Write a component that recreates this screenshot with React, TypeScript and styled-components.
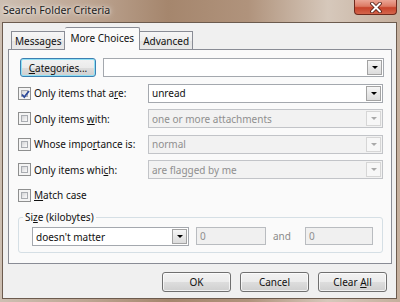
import React from 'react';
import styled, { createGlobalStyle, css } from 'styled-components';

const FONT = `"Noto Sans", "Open Sans", "DejaVu Sans", sans-serif`;

const Global = createGlobalStyle`
  html, body { margin: 0; padding: 0; background: #8b6f5a; }
  body { width: 400px; height: 302px; overflow: hidden; font-family: ${FONT}; }
  * { box-sizing: border-box; }
`;

const Window = styled.div`
  width: 400px;
  height: 302px;
  display: flex;
  flex-direction: column;
  padding: 0 3px 3px 2px;
  background: linear-gradient(90deg, #cdbfb2 0%, #bda592 22%, #a5866d 42%, #b0937c 62%, #d6c8bb 82%, #c5af9d 100%);
`;

const TitleBar = styled.div`
  height: 22px;
  flex: none;
  display: flex;
  justify-content: space-between;
  align-items: flex-start;
`;

const TitleText = styled.div`
  padding: 3px 0 0 1px;
  font-size: 10.6px;
  line-height: 14px;
  color: #1c1c1c;
  text-shadow: 0 0 6px rgba(255, 255, 255, 0.9), 0 0 3px rgba(255, 255, 255, 0.8);
`;

const CloseBtn = styled.div`
  width: 43px;
  height: 15px;
  border: 1px solid #6f2a1d;
  border-top: none;
  border-radius: 0 0 4px 4px;
  background: linear-gradient(180deg, #eba595 0%, #dc7a64 45%, #c7432b 55%, #d4664c 100%);
  display: flex;
  align-items: center;
  justify-content: center;
`;

const Client = styled.div`
  flex: 1;
  border: 1px solid #6c5b4e;
  background: #f0f0f0;
  display: flex;
  flex-direction: column;
  padding: 0 4px 0 5px;
`;

const TabStrip = styled.div`
  height: 26px;
  display: flex;
  align-items: flex-end;
  padding-left: 3px;
`;

const Tab = styled.div<{ $active?: boolean }>`
  font-size: 10px;
  color: #111;
  border: 1px solid #898c95;
  border-bottom: none;
  padding: 0 3px;
  display: flex;
  align-items: center;
  justify-content: center;
  ${(p) =>
    p.$active
      ? css`
          height: 23px;
          margin-bottom: -1px;
          padding: 0 5px 3px;
          background: #fafafa;
          position: relative;
          z-index: 1;
          border-radius: 2px 2px 0 0;
        `
      : css`
          height: 18px;
          background: linear-gradient(180deg, #f6f6f6 0%, #eeeeee 50%, #e3e3e3 51%, #e9e9e9 100%);
          & + & { border-left: none; }
        `}
`;

const Panel = styled.div`
  height: 215px;
  border: 1px solid #898c95;
  background: #fafafa;
  padding: 8px 0 0 9px;
  display: flex;
  flex-direction: column;
  gap: 6.5px;
`;

const Row = styled.div`
  height: 19px;
  display: flex;
  align-items: center;
`;

const Label = styled.div<{ $w?: number }>`
  display: flex;
  align-items: center;
  gap: 3px;
  width: ${(p) => (p.$w ? `${p.$w}px` : 'auto')};
  font-size: 10px;
  color: #111;
  white-space: nowrap;
`;

const U = styled.span`
  text-decoration: underline;
  text-underline-offset: 1px;
`;

const Check = styled.span`
  width: 13px;
  height: 13px;
  flex: none;
  border: 1px solid #8e8f8f;
  background: #f4f4f4;
  padding: 2px;
  display: flex;
  position: relative;
  &::before {
    content: '';
    flex: 1;
    border: 1px solid #a9acb1;
    background: linear-gradient(135deg, #d3d4d6 0%, #ececed 60%, #fbfbfb 100%);
  }
`;

const CheckMark = styled.svg`
  position: absolute;
  left: 1px;
  top: 1px;
`;

const Combo = styled.div<{ $w: number; $disabled?: boolean }>`
  width: ${(p) => p.$w}px;
  height: 19px;
  flex: none;
  display: flex;
  align-items: center;
  border: 1px solid ${(p) => (p.$disabled ? '#c2c4c8' : '#a4a8ae')};
  background: ${(p) => (p.$disabled ? '#f2f2f2' : '#ffffff')};
  color: ${(p) => (p.$disabled ? '#8f8f8f' : '#111')};
  font-size: 10px;
  padding: 0 1px 0 3px;
`;

const ComboText = styled.span`
  flex: 1;
  white-space: nowrap;
  overflow: hidden;
`;

const DropBtn = styled.span<{ $disabled?: boolean }>`
  width: 15px;
  height: 15px;
  flex: none;
  border: 1px solid ${(p) => (p.$disabled ? '#d6d6d6' : '#a3a3a3')};
  background: ${(p) =>
    p.$disabled ? '#f7f7f7' : 'linear-gradient(180deg, #f6f6f6 0%, #e8e8e8 50%, #dcdcdc 100%)'};
  display: flex;
  align-items: center;
  justify-content: center;
  &::after {
    content: '';
    width: 0;
    height: 0;
    border-left: 3px solid transparent;
    border-right: 3px solid transparent;
    border-top: 3px solid ${(p) => (p.$disabled ? '#a9a9a9' : '#000')};
  }
`;

const Button = styled.div<{ $w: number; $focus?: boolean }>`
  width: ${(p) => p.$w}px;
  height: ${(p) => (p.$focus ? 19 : 20)}px;
  flex: none;
  border: 1px solid ${(p) => (p.$focus ? '#3c7fb1' : '#707070')};
  border-radius: 3px;
  background: linear-gradient(180deg, #f2f2f2 0%, #ebebeb 50%, #dddddd 51%, #cfcfcf 100%);
  box-shadow: inset 0 0 0 1px ${(p) => (p.$focus ? '#8fe1f5' : 'rgba(255,255,255,0.7)')};
  display: flex;
  align-items: center;
  justify-content: center;
  font-size: 10px;
  color: #111;
  white-space: pre;
`;

const TopRow = styled(Row)`
  padding-left: 2px;
  gap: 7px;
`;

const Group = styled.fieldset`
  margin: -1px 0 0 0;
  width: 365px;
  border: 1px solid #d5dfe5;
  border-radius: 3px;
  padding: 0 6px 6px 4px;
  min-inline-size: 0;
`;

const Legend = styled.legend`
  padding: 0 2px;
  font-size: 10px;
  line-height: 14px;
  color: #111;
`;

const GroupRow = styled.div`
  display: flex;
  align-items: flex-start;
  margin: 3px 0 0 9px;
`;

const TextBox = styled.div<{ $w: number; $ml?: number }>`
  width: ${(p) => p.$w}px;
  height: 18px;
  margin-left: ${(p) => p.$ml ?? 0}px;
  border: 1px solid #b9bcc0;
  background: #f0f0f0;
  color: #8f8f8f;
  font-size: 10px;
  display: flex;
  align-items: center;
  padding-left: 3px;
`;

const AndText = styled.span`
  font-size: 10px;
  color: #8a8a8a;
  line-height: 18px;
  margin: 0 14px 0 7px;
`;

const ButtonRow = styled.div`
  display: flex;
  justify-content: flex-end;
  gap: 9px;
  margin-top: 8px;
  padding-right: 5px;
`;

const CheckBox: React.FC<{ checked?: boolean }> = ({ checked }) => (
  <Check>
    {checked && (
      <CheckMark width="11" height="11" viewBox="0 0 11 11">
        <path d="M2 5.5 L4.3 8 L9 2" fill="none" stroke="#2d4a9a" strokeWidth="1.8" />
      </CheckMark>
    )}
  </Check>
);

const ComboBox: React.FC<{ w: number; text?: string; disabled?: boolean }> = ({ w, text, disabled }) => (
  <Combo $w={w} $disabled={disabled}>
    <ComboText>{text}</ComboText>
    <DropBtn $disabled={disabled} />
  </Combo>
);

const criteria: { pre: string; u: string; post: string; value: string; checked?: boolean; disabled?: boolean }[] = [
  { pre: 'Only items that a', u: 'r', post: 'e:', value: 'unread', checked: true },
  { pre: 'Only items ', u: 'w', post: 'ith:', value: 'one or more attachments', disabled: true },
  { pre: 'Whose impo', u: 'r', post: 'tance is:', value: 'normal', disabled: true },
  { pre: 'Only items whi', u: 'c', post: 'h:', value: 'are flagged by me', disabled: true },
];

export default function App() {
  return (
    <>
      <Global />
      <Window>
        <TitleBar>
          <TitleText>Search Folder Criteria</TitleText>
          <CloseBtn>
            <svg width="14" height="11" viewBox="0 0 14 11">
              <path d="M3 1.5 L11 9.5 M11 1.5 L3 9.5" stroke="#4a1a12" strokeWidth="3.6" strokeLinecap="round" />
              <path d="M3 1.5 L11 9.5 M11 1.5 L3 9.5" stroke="#ffffff" strokeWidth="2" strokeLinecap="round" />
            </svg>
          </CloseBtn>
        </TitleBar>
        <Client>
          <TabStrip>
            <Tab>Messages</Tab>
            <Tab $active>More Choices</Tab>
            <Tab>Advanced</Tab>
          </TabStrip>
          <Panel>
            <TopRow>
              <Button $w={76} $focus>
                <span>
                  <U>C</U>ategories...
                </span>
              </Button>
              <ComboBox w={281} />
            </TopRow>
            {criteria.map((c) => (
              <Row key={c.pre + c.post}>
                <Label $w={130}>
                  <CheckBox checked={c.checked} />
                  <span>
                    {c.pre}
                    <U>{c.u}</U>
                    {c.post}
                  </span>
                </Label>
                <ComboBox w={235} text={c.value} disabled={c.disabled} />
              </Row>
            ))}
            <Row>
              <Label>
                <CheckBox />
                <span>
                  <U>M</U>atch case
                </span>
              </Label>
            </Row>
            <Group>
              <Legend>
                Si<U>z</U>e (kilobytes)
              </Legend>
              <GroupRow>
                <ComboBox w={157} text="doesn't matter" />
                <TextBox $w={70} $ml={7}>0</TextBox>
                <AndText>and</AndText>
                <TextBox $w={68}>0</TextBox>
              </GroupRow>
            </Group>
          </Panel>
          <ButtonRow>
            <Button $w={69}>OK</Button>
            <Button $w={69}>Cancel</Button>
            <Button $w={69}>
              <span>
                Clear <U>A</U>ll
              </span>
            </Button>
          </ButtonRow>
        </Client>
      </Window>
    </>
  );
}
